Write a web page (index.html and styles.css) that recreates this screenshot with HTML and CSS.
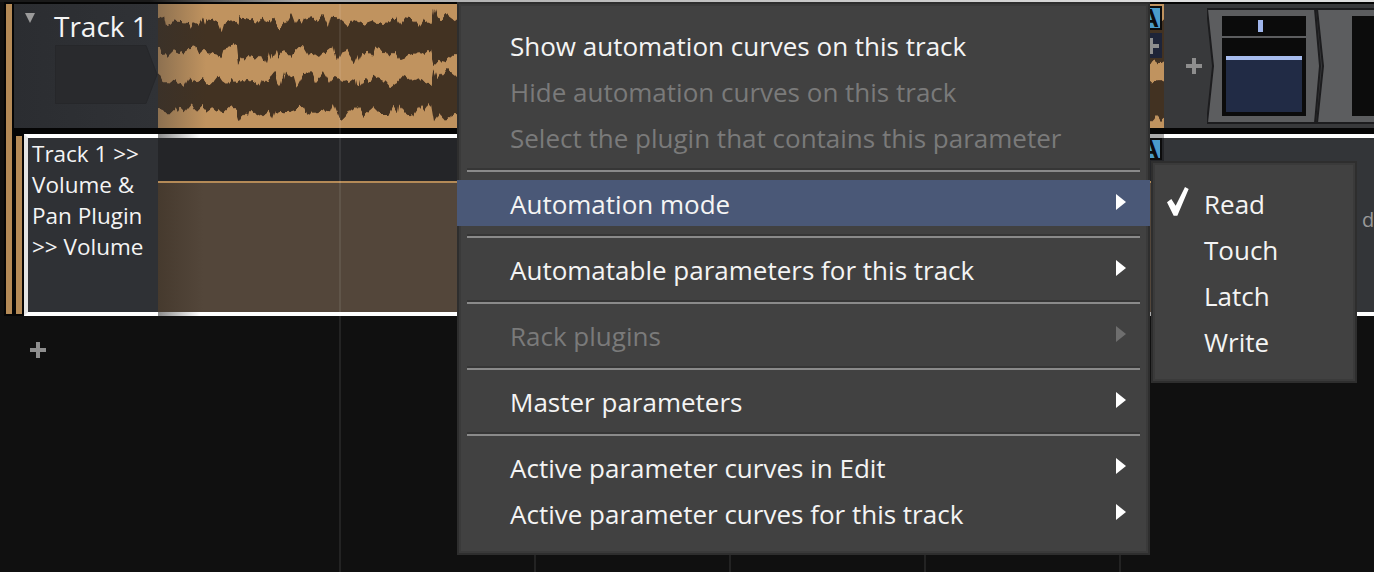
FILE: index.html
```html
<!DOCTYPE html>
<html>
<head>
    <title>Automation menu</title>
    <link rel="stylesheet" href="styles.css">
</head>
<body>
    <div class="app">
        <div class="topline"></div>

        <div class="lanes">
            <div class="strip"></div>
            <div class="lane-rows">
                <div class="track">
                    <div class="track-head">
                        <div class="head-top">
                            <span class="collapse"></span>
                            <span class="track-name">Track 1</span>
                        </div>
                        <svg class="plugin-slot" width="103" height="60" viewBox="0 0 103 60">
                            <polygon points="0.5,0.5 91,0.5 102,29.5 91,58.5 0.5,58.5" fill="#292a2d" stroke="#26272a"/>
                        </svg>
                    </div>
                    <div class="clip">
                        <svg class="wave" viewBox="0 0 3018 372" preserveAspectRatio="none">
                            <defs>
                                <filter id="rough" x="0" y="0" width="100%" height="100%" filterUnits="objectBoundingBox">
                                    <feTurbulence type="fractalNoise" baseFrequency="0.07 0.002" numOctaves="2" seed="4"/>
                                    <feDisplacementMap in="SourceGraphic" scale="26" xChannelSelector="A" yChannelSelector="R"/>
                                </filter>
                            </defs>
                            <g filter="url(#rough)">
                                <polygon fill="#433021" points="-40,45 0,45 11,38 18,35 24,65 36,58 56,50 76,52 88,58 96,72 106,55 121,62 131,42 139,68 148,42 166,48 181,55 191,82 198,58 221,48 238,60 246,32 256,45 271,48 284,42 296,58 314,38 324,55 341,45 356,65 371,70 384,55 400,25 412,58 421,42 434,62 441,45 461,40 476,50 496,33 513,70 521,38 536,40 556,58 571,72 591,48 616,60 641,50 656,60 691,55 716,38 726,60 739,40 761,42 781,68 796,45 821,60 828,15 836,40 851,45 866,30 893,50 3060,50 3060,160 3005,178 2990,165 2976,175 893,150 863,175 846,170 829,180 819,135 801,150 781,145 751,155 726,165 711,140 691,160 681,145 656,130 646,160 631,140 606,145 593,178 571,140 546,150 536,172 526,130 506,145 486,155 471,145 456,155 441,130 416,130 401,155 376,140 364,155 356,130 341,162 334,140 324,178 311,150 296,165 276,155 261,170 251,160 240,180 234,122 226,125 196,135 189,160 181,150 161,145 141,138 121,148 111,125 96,130 76,140 61,150 46,140 31,155 26,148 6,150 0,135 -40,135"/>
                                <polygon fill="#433021" points="-40,215 0,215 8,232 36,232 51,235 76,243 88,218 101,235 131,225 141,235 166,235 181,215 191,230 208,242 221,225 231,238 246,228 266,235 291,230 306,248 314,222 326,235 334,218 348,200 358,235 371,242 382,200 394,215 411,210 421,245 436,215 441,210 461,208 471,235 496,205 516,240 531,222 546,230 571,240 596,222 601,245 621,218 636,235 646,215 681,230 696,250 716,235 736,210 761,230 786,222 821,240 829,190 841,225 866,195 893,215 2976,225 2990,232 3005,228 3060,240 3060,330 3010,350 3000,335 2990,352 2976,338 893,330 863,350 846,330 829,355 819,295 801,320 786,300 761,340 741,325 721,295 716,325 703,305 691,330 666,330 646,310 616,335 601,310 576,320 559,345 541,340 526,300 516,325 481,320 451,335 441,310 436,305 426,310 396,320 376,325 351,320 341,350 326,320 306,335 281,320 274,345 256,330 244,352 234,318 216,308 196,328 176,318 161,305 141,320 126,305 111,320 96,298 76,322 61,308 51,325 26,325 0,315 -40,315"/>
                            </g>
                        </svg>
                        <span class="badge badge-top">A</span>
                        <span class="curve-btn"><span class="plus"></span></span>
                    </div>
                    <div class="plugins">
                        <span class="plus"></span>
                        <svg class="chain" width="167" height="124" viewBox="0 0 167 124">
                            <polygon points="110,5 175,5 175,119 110,119 116,62" fill="#5c5d5f" stroke="#1c1c1e" stroke-width="2"/>
                            <rect x="145" y="12" width="22" height="100" fill="#0c0c0c"/>
                            <polygon points="0,5 108,5 113,62 108,119 0,119 6,62" fill="#5c5d5f" stroke="#1c1c1e" stroke-width="2"/>
                            <rect x="15" y="12" width="84" height="20" fill="#0b0b0b"/>
                            <rect x="51" y="16" width="5" height="12" fill="#a0b6ec"/>
                            <rect x="15" y="34" width="84" height="78" fill="#0b0b0b"/>
                            <rect x="19" y="52" width="76" height="56" fill="#212b45"/>
                            <rect x="19" y="52" width="76" height="4" fill="#a7bcee"/>
                        </svg>
                    </div>
                </div>

                <div class="auto-track">
                    <div class="strip"></div>
                    <div class="auto-head">
                        <div>Track 1 &gt;&gt;</div>
                        <div>Volume &amp;</div>
                        <div>Pan Plugin</div>
                        <div>&gt;&gt; Volume</div>
                    </div>
                    <div class="auto-clip">
                        <div class="curve-top"></div>
                        <div class="curve-fill"></div>
                        <span class="badge badge-auto">A</span>
                    </div>
                    <div class="auto-side">
                        <span class="side-text">d</span>
                    </div>
                </div>
            </div>
        </div>

        <div class="add-row"><span class="plus"></span></div>

        <div class="grid-lines"></div>

        <div class="menu">
            <div class="item">Show automation curves on this track</div>
            <div class="item off">Hide automation curves on this track</div>
            <div class="item off">Select the plugin that contains this parameter</div>
            <div class="sep"></div>
            <div class="item active">Automation mode<span class="arrow"></span></div>
            <div class="sep"></div>
            <div class="item">Automatable parameters for this track<span class="arrow"></span></div>
            <div class="sep"></div>
            <div class="item off">Rack plugins<span class="arrow"></span></div>
            <div class="sep"></div>
            <div class="item">Master parameters<span class="arrow"></span></div>
            <div class="sep"></div>
            <div class="item">Active parameter curves in Edit<span class="arrow"></span></div>
            <div class="item">Active parameter curves for this track<span class="arrow"></span></div>
        </div>

        <div class="submenu">
            <div class="item">
                <svg class="check" width="22" height="29" viewBox="202 176 66 87">
                    <polygon points="202,222 215,212 228,232 256,176 267,182 233,262 222,262" fill="#fff"/>
                </svg>
                Read
            </div>
            <div class="item">Touch</div>
            <div class="item">Latch</div>
            <div class="item">Write</div>
        </div>
    </div>
</body>
</html>
```

FILE: styles.css
```css
html, body {
    margin: 0;
    padding: 0;
}

.app {
    position: relative;
    width: 1374px;
    height: 572px;
    overflow: hidden;
    background-color: #101010;
    font-family: "Open Sans", "Noto Sans", sans-serif;
    color: #f4f4f4;
}

.topline {
    height: 2px;
    background: linear-gradient(90deg, #1a1a1a 150px, #aaa 300px, #ddd 1164px);
}

/* both lanes sit beside the long track colour strip */
.lanes {
    display: flex;
    height: 314px;
    margin-left: 4px;
    padding: 2px 0 0 2px;
    box-sizing: border-box;
    background-color: #050505;
}

.strip {
    flex: none;
    width: 6px;
    height: 310px;
    background-color: #b48a57;
}

.lane-rows {
    flex: 1;
    min-width: 0;
}

/* first track */
.track {
    display: flex;
    height: 124px;
}

.track-head {
    width: 144px;
    margin-left: 2px;
    background: linear-gradient(90deg, #2b2d31, #303236);
}

.head-top {
    display: flex;
    height: 41px;
    padding-left: 11px;
}

.collapse {
    width: 0;
    height: 0;
    margin-top: 9px;
    border-left: 5px solid transparent;
    border-right: 5px solid transparent;
    border-top: 10px solid #9a9a9a;
}

.track-name {
    margin-left: 19px;
    font-size: 28px;
    line-height: 44px;
}

.plugin-slot {
    display: block;
    margin-left: 41px;
}

.clip {
    position: relative;
    width: 1006px;
    background-color: #c0935f;
}

.clip::after {
    content: "";
    position: absolute;
    top: 0;
    bottom: 0;
    left: 0;
    width: 48px;
    background: linear-gradient(90deg, rgba(46, 48, 52, 0.35), rgba(46, 48, 52, 0));
}

.wave {
    display: block;
    width: 100%;
    height: 100%;
}

.badge {
    position: absolute;
    right: 2px;
    width: 30px;
    box-sizing: border-box;
    border: 2px solid #0c0c0c;
    background-color: #4a9cc9;
    color: #0c0c0c;
    font-family: "Liberation Sans", sans-serif;
    font-size: 26px;
    font-weight: bold;
    line-height: 20px;
    text-align: right;
    padding-right: 1px;
    overflow: hidden;
}

.badge-top {
    top: 2px;
    height: 24px;
}

.curve-btn {
    position: absolute;
    top: 29px;
    right: 2px;
    width: 30px;
    height: 25px;
    background-color: #1e2438;
}

.curve-btn .plus {
    position: absolute;
    top: 5px;
    left: 11px;
}

/* plus sign, used three times */
.plus {
    position: relative;
    display: block;
    width: 16px;
    height: 16px;
}

.plus::before, .plus::after {
    content: "";
    position: absolute;
    background-color: #8e8e8e;
}

.plus::before {
    left: 0;
    top: 6px;
    width: 16px;
    height: 4px;
}

.plus::after {
    left: 6px;
    top: 0;
    width: 4px;
    height: 16px;
}

.plugins {
    display: flex;
    align-items: center;
    flex: 1;
    padding-left: 22px;
    background-color: #38393b;
}

.chain {
    display: block;
    margin-left: 5px;
    flex: none;
}

/* automation lane */
.auto-track {
    display: flex;
    height: 182px;
    margin-top: 6px;
    padding-left: 4px;
}

.auto-track .strip {
    height: 178px;
    margin-top: 2px;
}

.auto-head {
    width: 126px;
    height: 174px;
    margin-left: 2px;
    padding-left: 4px;
    border-top: 4px solid #fff;
    border-bottom: 4px solid #fff;
    border-left: 4px solid #e4e4e4;
    background-color: #2f3135;
    font-size: 22.5px;
    line-height: 31px;
}

.auto-clip {
    position: relative;
    width: 1006px;
    padding: 4px 0;
    box-sizing: border-box;
    background:
        linear-gradient(90deg, #8c8c8c, #fff 42px, #fff 992px, #aaa 992px) top / 100% 4px no-repeat,
        linear-gradient(90deg, #8c8c8c, #fff 42px, #fff 992px, #aaa 992px) bottom / 100% 4px no-repeat;
}

.curve-top {
    height: 43px;
    border-bottom: 2px solid #b48a57;
    background-color: #242528;
}

.curve-fill {
    height: 129px;
    background: linear-gradient(90deg, #463a2e, #53463a 45px);
}

.badge-auto {
    top: 4px;
    height: 22px;
    line-height: 18px;
}

.auto-side {
    flex: 1;
    position: relative;
    border-top: 4px solid #fff;
    border-bottom: 4px solid #fff;
    background-color: #333538;
}

.side-text {
    position: absolute;
    left: 198px;
    top: 68px;
    font-size: 20px;
    color: #999;
}

.add-row {
    padding: 26px 0 0 30px;
}

/* bar lines run over the lanes */
.grid-lines {
    position: absolute;
    top: 4px;
    bottom: 0;
    left: 158px;
    width: 1006px;
    background: linear-gradient(90deg, rgba(255, 255, 255, 0.08) 2px, transparent 2px) 181px 0 / 195px 100%;
    pointer-events: none;
}

/* context menu */
.menu, .submenu {
    position: absolute;
    box-sizing: border-box;
    border: 2px solid #2e2e2e;
    background-color: #414141;
    box-shadow: inset 0 0 0 2px #3a3a3a;
    font-size: 26px;
}

.menu {
    left: 457px;
    top: 2px;
    width: 693px;
    height: 553px;
    padding-top: 18px;
}

.submenu {
    left: 1151px;
    top: 161px;
    width: 206px;
    height: 222px;
    padding-top: 17px;
}

.item {
    position: relative;
    display: flex;
    align-items: center;
    height: 46px;
    padding-top: 3px;
    box-sizing: border-box;
    line-height: 43px;
    padding-left: 51px;
    padding-right: 22px;
}

.submenu .item {
    padding-left: 51px;
}

.item.off {
    color: #7a7a7a;
}

.item.active {
    margin: 0 -2px 0 -2px;
    padding-left: 53px;
    padding-right: 24px;
    background-color: #4a5877;
}

.arrow {
    margin-left: auto;
    margin-top: -5px;
    border-top: 8px solid transparent;
    border-bottom: 8px solid transparent;
    border-left: 10px solid #fff;
}

.item.off .arrow {
    border-left-color: #6e6e6e;
}

.check {
    position: absolute;
    left: 14px;
    top: 7px;
}

.sep {
    height: 20px;
    margin: 0 8px;
    padding-top: 10px;
    box-sizing: border-box;
}

.sep::before {
    content: "";
    display: block;
    height: 2px;
    background-color: #8a8a8a;
    box-shadow: 0 -2px 0 #363636;
}
```
